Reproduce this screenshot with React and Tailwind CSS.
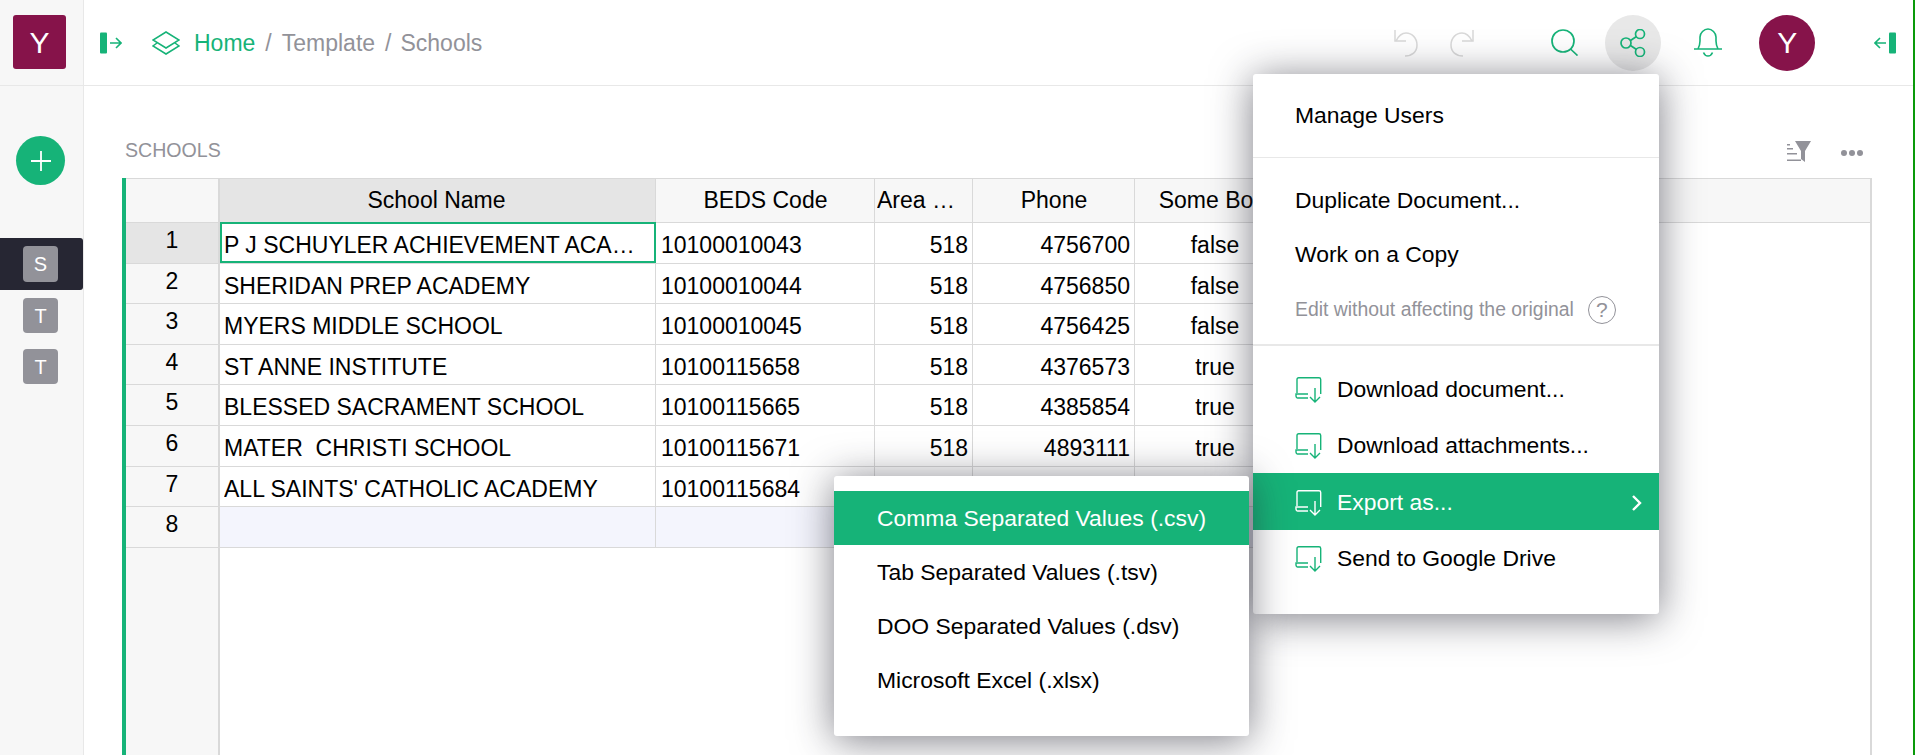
import React from 'react';

const green = 'text-[#16b378]';

const rows = [
  ['P J SCHUYLER ACHIEVEMENT ACADEMY', '10100010043', '518', '4756700', 'false'],
  ['SHERIDAN PREP ACADEMY', '10100010044', '518', '4756850', 'false'],
  ['MYERS MIDDLE SCHOOL', '10100010045', '518', '4756425', 'false'],
  ['ST ANNE INSTITUTE', '10100115658', '518', '4376573', 'true'],
  ['BLESSED SACRAMENT SCHOOL', '10100115665', '518', '4385854', 'true'],
  ['MATER\u00a0 CHRISTI SCHOOL', '10100115671', '518', '4893111', 'true'],
  ["ALL SAINTS' CATHOLIC ACADEMY", '10100115684', '518', '', ''],
];

const PanelIcon = ({ flip }) => (
  <svg width="22" height="22" viewBox="0 0 22 22" className={`${green} ${flip ? '-scale-x-100' : ''}`} fill="none" stroke="currentColor" strokeWidth="1.6">
    <rect x="0" y="0.5" width="7" height="21" rx="1" fill="currentColor" stroke="none" />
    <path d="M10 11h11M16 6l5 5-5 5" />
  </svg>
);

const ExportIcon = ({ className }) => (
  <svg width="27" height="26" viewBox="0 0 27 26" className={className} fill="none" stroke="currentColor" strokeWidth="1.4">
    <path d="M2 16V2.5Q2 .8 3.7 .8H24Q25.7 .8 25.7 2.5V17" />
    <path d="M13 17H1Q.7 21 2.5 21H13" />
    <path d="M20 11v14M15 20l5 5 5-5" />
  </svg>
);

function Sidebar() {
  return (
    <div className="w-[84px] shrink-0 bg-[#f7f7f7] border-r border-[#e8e8e8] flex flex-col">
      <div className="h-[86px] border-b border-[#e8e8e8] pt-[15px] pl-[13px]">
        <div className="w-[53px] h-[54px] rounded-[3px] bg-[#86134a] text-white text-[30px] flex items-center justify-center">Y</div>
      </div>
      <div className="mt-[50px] ml-[16px] w-[49px] h-[49px] rounded-full bg-[#16b378] flex items-center justify-center">
        <svg width="20" height="20" viewBox="0 0 20 20" stroke="white" strokeWidth="1.8"><path d="M10 0v20M0 10h20" /></svg>
      </div>
      <div className="mt-[53px] h-[52px] rounded-r-[3px] bg-[#262633] flex items-center pl-[23px]">
        <div className="w-[35px] h-[36px] rounded-[4px] bg-[#929299] text-white text-[20px] flex items-center justify-center">S</div>
      </div>
      <div className="mt-[8px] ml-[23px] w-[35px] h-[35px] rounded-[4px] bg-[#929299] text-white text-[20px] flex items-center justify-center">T</div>
      <div className="mt-[16px] ml-[23px] w-[35px] h-[35px] rounded-[4px] bg-[#929299] text-white text-[20px] flex items-center justify-center">T</div>
    </div>
  );
}

function TopBar() {
  return (
    <div className="h-[86px] shrink-0 border-b border-[#e8e8e8] flex items-center text-[23px] pl-[16px]">
      <PanelIcon />
      <svg width="28" height="24" viewBox="0 0 28 24" className={`${green} ml-[30px]`} fill="none" stroke="currentColor" strokeWidth="1.5">
        <path d="M14 1l13 8-13 8L1 9z" />
        <path d="M5 12l-4 3 13 8 13-8-4-3" />
      </svg>
      <span className={`${green} ml-[14px] mt-[2px]`}>Home</span>
      <span className="text-[#929299] ml-[10px] mt-[2px]">/</span>
      <span className="text-[#929299] ml-[10px] mt-[2px]">Template</span>
      <span className="text-[#929299] ml-[10px] mt-[2px]">/</span>
      <span className="text-[#929299] ml-[9px] mt-[2px]">Schools</span>

      <svg width="24" height="28" viewBox="0 0 24 28" className="ml-[912px] text-[#d9d9d9]" fill="none" stroke="currentColor" strokeWidth="1.5">
        <path d="M1 1v11h11" />
        <path d="M2 12C5 6 9 4 12 4c6 0 11 5 11 12s-5 11-12 11" />
      </svg>
      <svg width="24" height="28" viewBox="0 0 24 28" className="ml-[32px] -scale-x-100 text-[#d9d9d9]" fill="none" stroke="currentColor" strokeWidth="1.5">
        <path d="M1 1v11h11" />
        <path d="M2 12C5 6 9 4 12 4c6 0 11 5 11 12s-5 11-12 11" />
      </svg>
      <svg width="28" height="27" viewBox="0 0 28 27" className={`${green} ml-[77px]`} fill="none" stroke="currentColor" strokeWidth="1.7">
        <circle cx="12" cy="12" r="11" />
        <path d="M19.5 20l7 6.5" />
      </svg>
      <div className="ml-[26px] w-[56px] h-[56px] rounded-full bg-[#e8e8e8] flex items-center justify-center">
        <svg width="26" height="28" viewBox="0 0 26 28" className={green} fill="none" stroke="currentColor" strokeWidth="1.7">
          <circle cx="6" cy="14" r="5" />
          <circle cx="20" cy="5" r="4.5" />
          <circle cx="20" cy="23" r="4.5" />
          <path d="M10.5 11.5l6-4M10.5 16.5l6 4" />
        </svg>
      </div>
      <svg width="30" height="29" viewBox="0 0 30 29" className={`${green} ml-[32px]`} fill="none" stroke="currentColor" strokeWidth="1.6">
        <path d="M1 21h28M5 21c1-2 2-4 2-8V9c0-4 4-8 8-8s8 4 8 8v4c0 4 1 6 2 8" />
        <path d="M10.5 24.5c1 2.500 2.500 3.500 4.500 3.500s3.500-1 4.500-3.500" />
      </svg>
      <div className="ml-[36px] w-[56px] h-[56px] rounded-full bg-[#86134a] text-white text-[30px] flex items-center justify-center">Y</div>
      <div className="ml-[59px]"><PanelIcon flip /></div>
    </div>
  );
}

const Cell = ({ w, className = '', children }) => (
  <div className={`${w} shrink-0 border-r border-[#d9d9d9] pl-[5px] pr-[4px] pt-[5px] h-full flex items-center truncate ${className}`}>
    <span className="truncate w-full">{children}</span>
  </div>
);

function Table() {
  return (
    <div className="ml-[38px] mr-[41px] flex-1 min-h-0 flex border-l-4 border-[#16b378] text-[23px] text-black">
      <div className="w-[94px] shrink-0 bg-[#f7f7f7] border-r-2 border-[#d9d9d9] flex flex-col">
        <div className="h-[45px] border-t border-b border-[#d9d9d9]" />
        {[1, 2, 3, 4, 5, 6, 7, 8].map((n) => (
          <div key={n} className={`h-[40.6px] border-b border-[#d9d9d9] text-center leading-[35px] ${n === 1 ? 'bg-[#e5e5e5]' : ''}`}>{n}</div>
        ))}
      </div>
      <div className="flex-1 flex flex-col border-r-2 border-[#d9d9d9]">
        <div className="h-[45px] shrink-0 border-t border-b border-[#d9d9d9] bg-[#f7f7f7] flex text-center">
          <Cell w="w-[436px]" className="bg-[#e5e5e5] !pt-0 !pl-[4px] !pr-[6px]">School Name</Cell>
          <Cell w="w-[219px]" className="!pt-0">BEDS Code</Cell>
          <Cell w="w-[98px]" className="!pt-0 !pl-[2px] !pr-[2px]">Area Code</Cell>
          <Cell w="w-[162px]" className="!pt-0">Phone</Cell>
          <Cell w="w-[160px]" className="!pt-0">Some Bool</Cell>
        </div>
        {rows.map((r, i) => (
          <div key={i} className="h-[40.6px] shrink-0 w-[1075px] flex border-b border-[#d9d9d9] relative">
            <Cell w="w-[436px]" className="!pl-[4px]">{r[0]}</Cell>
            <Cell w="w-[219px]">{r[1]}</Cell>
            <Cell w="w-[98px]" className="text-right">{r[2]}</Cell>
            <Cell w="w-[162px]" className="text-right">{r[3]}</Cell>
            <Cell w="w-[160px]" className="text-center">{r[4]}</Cell>
            {i === 0 && <div className="absolute left-0 -top-px w-[436px] h-[41px] border-2 border-[#16b378]" />}
          </div>
        ))}
        <div className="h-[40.6px] shrink-0 w-[1075px] flex border-b border-[#d9d9d9] bg-[#f4f5fd]">
          <Cell w="w-[436px]" />
          <Cell w="w-[219px]" />
          <Cell w="w-[98px]" />
          <Cell w="w-[162px]" />
          <Cell w="w-[160px]" />
        </div>
      </div>
    </div>
  );
}

const MenuItem = ({ label, active, arrow }) => (
  <div className={`h-[56.5px] pl-[42px] pr-[17px] pt-[3px] flex items-center ${active ? 'bg-[#16b378] text-white' : 'text-black'}`}>
    <ExportIcon className={active ? 'text-white' : green} />
    <span className="ml-[15px] mb-[2px] flex-1">{label}</span>
    {arrow && (
      <svg width="10" height="16" viewBox="0 0 10 16" fill="none" stroke="white" strokeWidth="2.4"><path d="M1 1l7 7-7 7" /></svg>
    )}
  </div>
);

function DocMenu() {
  return (
    <div className="absolute left-[1253px] top-[74px] w-[406px] h-[540px] rounded-[3px] bg-white text-[22.9px] text-black shadow-[0_4px_40px_0_rgba(38,38,51,0.6)]">
      <div className="pt-[15px] pb-[14px] border-b border-[#e8e8e8]">
        <div className="h-[54px] pl-[42px] pb-[2px] flex items-center">Manage Users</div>
      </div>
      <div className="pt-[16px] pb-[6px] border-b-2 border-[#e8e8e8]">
        <div className="h-[54px] pl-[42px] pb-[2px] flex items-center">Duplicate Document...</div>
        <div className="h-[54px] pl-[42px] pb-[2px] flex items-center">Work on a Copy</div>
        <div className="h-[56px] pl-[42px] flex items-center text-[19.4px] text-[#929299]">
          Edit without affecting the original
          <span className="ml-[14px] w-[28px] h-[28px] rounded-full border border-[#929299] flex items-center justify-center text-[21px]">?</span>
        </div>
      </div>
      <div className="pt-[14px]">
        <MenuItem label="Download document..." />
        <MenuItem label="Download attachments..." />
        <MenuItem label="Export as..." active arrow />
        <MenuItem label="Send to Google Drive" />
      </div>
    </div>
  );
}

function ExportMenu() {
  const items = ['Comma Separated Values (.csv)', 'Tab Separated Values (.tsv)', 'DOO Separated Values (.dsv)', 'Microsoft Excel (.xlsx)'];
  return (
    <div className="absolute left-[834px] top-[476px] w-[415px] h-[260px] pt-[15px] rounded-[3px] bg-white text-[22.9px] text-black shadow-[0_4px_40px_0_rgba(38,38,51,0.6)]">
      {items.map((t, i) => (
        <div key={t} className={`h-[54px] pl-[43px] flex items-center ${i === 0 ? 'bg-[#16b378] text-white' : ''}`}>{t}</div>
      ))}
    </div>
  );
}

export default function App() {
  return (
    <div className="relative w-full h-screen overflow-hidden flex bg-white border-r-2 border-[#0a9a0a] font-['Liberation_Sans',sans-serif]">
      <Sidebar />
      <div className="flex-1 min-w-0 flex flex-col">
        <TopBar />
        <div className="h-[92px] shrink-0 flex items-end pb-[17px] pl-[41px] pr-[50px]">
          <span className="text-[19.6px] text-[#929299] leading-none">SCHOOLS</span>
          <div className="ml-auto flex items-start mb-[-2px]">
            <svg width="24" height="22" viewBox="0 0 24 22" className="text-[#929299]" fill="currentColor">
              <path d="M8 0h16l-6 10v11l-4-3v-8z" />
              <path d="M0 3h3v1.500H0zM0 7h6v1.500H0zM0 12h10v1.500H0zM0 18.500h14v1.500H0z" />
            </svg>
            <svg width="22" height="6" viewBox="0 0 22 6" className="ml-[30px] mt-[9px] text-[#929299]" fill="currentColor">
              <circle cx="3" cy="3" r="3" /><circle cx="11" cy="3" r="3" /><circle cx="19" cy="3" r="3" />
            </svg>
          </div>
        </div>
        <Table />
      </div>
      <DocMenu />
      <ExportMenu />
    </div>
  );
}
